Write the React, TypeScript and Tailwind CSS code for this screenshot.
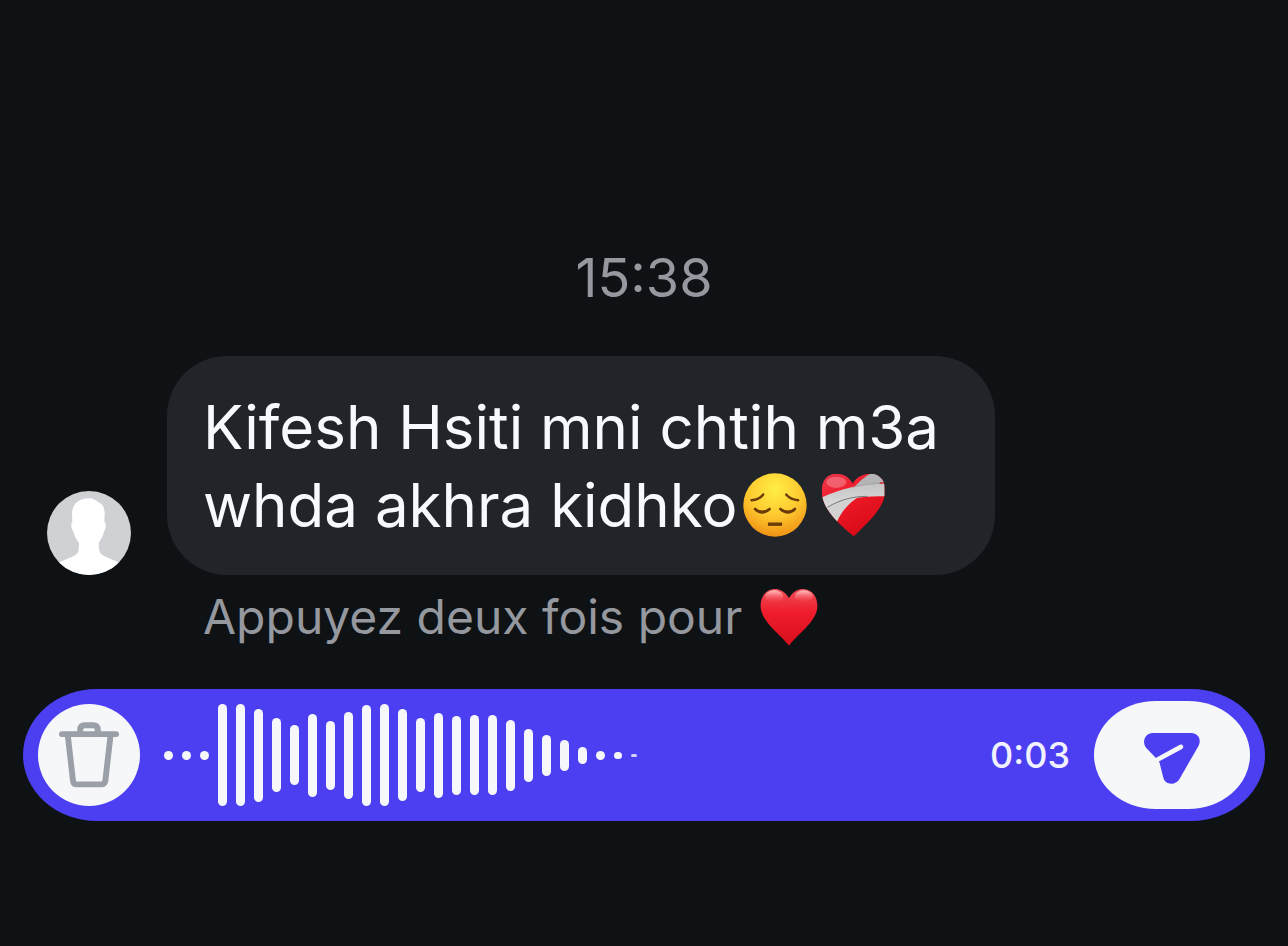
const waveform = [9, 9, 9, 102, 102, 93, 74, 60, 83, 69, 87, 101, 102, 92, 74, 85, 79, 80, 80, 71, 53, 41, 31, 17, 9];

interface IconProps {
  className?: string;
}

const Avatar = ({ className }: IconProps) => (
  <svg viewBox="0 0 252 252" className={className} role="img" aria-label="Photo de profil">
    <defs>
      <clipPath id="avatar-clip">
        <circle cx="126" cy="126" r="126" />
      </clipPath>
    </defs>
    <g clipPath="url(#avatar-clip)">
      <rect width="252" height="252" fill="#cfd1d4" />
      <path
        fill="#fff"
        d="M125 22C138 21 146 27 153 33C167 38 174 52 173 70L172 92C179 98 177 114 171 121C169 134 162 146 155 155L156 174C158 188 166 193 180 199L212 213V252H38V213L74 198C88 192 94 187 95 174L96 156C88 147 82 134 79 121C72 114 71 98 76 92L75 68C75 42 92 23 125 22Z"
      />
    </g>
  </svg>
);

const PensiveFace = ({ className }: IconProps) => (
  <svg viewBox="0 0 190 190" className={className} role="img" aria-label="😔">
    <defs>
      <radialGradient id="face" cx="0.5" cy="0.25" r="0.78">
        <stop offset="0" stopColor="#ffee45" />
        <stop offset="0.55" stopColor="#fdc82f" />
        <stop offset="1" stopColor="#ee8d12" />
      </radialGradient>
    </defs>
    <circle cx="95" cy="95" r="94" fill="url(#face)" />
    <g fill="none" stroke="#6b3b09" strokeLinecap="round">
      <path strokeWidth="7" d="M25 81Q48 80 60 64M128 64Q142 80 164 81" />
      <path strokeWidth="8" d="M36 107Q56 127 79 107M111 107Q134 127 154 107" />
      <path strokeWidth="10" strokeLinecap="butt" d="M74 152H116" />
    </g>
    <path fill="#6b3b09" d="M36 107Q56 115 79 107Q56 130 36 107ZM111 107Q134 115 154 107Q132 130 111 107Z" />
  </svg>
);

const MendingHeart = ({ className }: IconProps) => (
  <svg viewBox="0 0 192 192" className={className} role="img" aria-label="❤️‍🩹">
    <defs>
      <linearGradient id="mending" x1="0" y1="0" x2="0.5" y2="1">
        <stop offset="0" stopColor="#e63c50" />
        <stop offset="0.4" stopColor="#f21b2a" />
        <stop offset="1" stopColor="#d90c18" />
      </linearGradient>
      <linearGradient id="bandage" x1="0" y1="0" x2="0" y2="1">
        <stop offset="0" stopColor="#c4c4c4" />
        <stop offset="1" stopColor="#dededf" />
      </linearGradient>
      <clipPath id="mending-clip">
        <path d="M95 32C108 8 132 2 150 2C172 3 191 18 191 44V66C186 108 136 154 98 190C60 158 10 116 3 66C-2 30 14 2 46 2C70 2 86 14 95 32Z" />
      </clipPath>
    </defs>
    <g clipPath="url(#mending-clip)">
      <rect width="192" height="192" fill="url(#mending)" />
      <ellipse cx="46" cy="28" rx="30" ry="17" fill="#f9a0a8" opacity="0.45" />
      <path fill="#b3b4b5" d="M100 42C116 26 130 10 154 0L180 2L192 24L190 40L130 46Z" />
      <path fill="#d2d2d3" d="M14 104L88 66L116 70C84 90 62 114 48 146L18 122Z" />
      <path fill="url(#bandage)" d="M0 74C60 46 120 32 192 32V70C120 68 70 78 10 106Z" />
      <path fill="none" stroke="#77777c" strokeWidth="3" d="M20 102C60 80 94 70 140 70" />
      <path fill="none" stroke="#9c9da0" strokeWidth="2" d="M94 43Q140 31 176 31" />
      <path fill="none" stroke="#d9222f" strokeWidth="4" d="M176 30H192" />
    </g>
  </svg>
);

const RedHeart = ({ className }: IconProps) => (
  <svg viewBox="0 0 172 172" className={className} role="img" aria-label="❤️">
    <defs>
      <linearGradient id="heart" x1="0" y1="0" x2="0" y2="1">
        <stop offset="0" stopColor="#f04d57" />
        <stop offset="0.4" stopColor="#ef1d2d" />
        <stop offset="1" stopColor="#d80e1b" />
      </linearGradient>
      <linearGradient id="shine" x1="0" y1="0" x2="0" y2="1">
        <stop offset="0" stopColor="#ffc4c2" />
        <stop offset="1" stopColor="#f5505a" stopOpacity="0" />
      </linearGradient>
    </defs>
    <path
      fill="url(#heart)"
      d="M86 30C98 10 114 3 128 3C156 4 172 28 170 58C166 102 112 136 86 171C60 136 6 102 2 58C0 28 16 4 44 3C58 3 74 10 86 30Z"
    />
    <ellipse cx="42" cy="25" rx="27" ry="18" fill="url(#shine)" />
    <ellipse cx="130" cy="25" rx="27" ry="18" fill="url(#shine)" />
  </svg>
);

const TrashIcon = ({ className }: IconProps) => (
  <svg viewBox="0 0 186 202" className={className} aria-hidden="true">
    <g fill="none" stroke="#9a9fa8" strokeWidth="18" strokeLinecap="round">
      <path d="M10 37H176" />
      <path d="M66 37V25Q66 10 80 10H106Q120 10 120 25V37" />
      <path d="M28 40L44 180Q45 191 55 191H131Q141 191 143 180L159 40" />
    </g>
  </svg>
);

const SendIcon = ({ className }: IconProps) => (
  <svg viewBox="0 0 168 154" className={className} aria-hidden="true">
    <path
      fill="#4c3ff2"
      d="M26 0H142C163 0 174 20 164 39L107 138C96 159 64 158 58 136L46 88L34 74L7 46C-9 28 3 0 26 0Z"
    />
    <path fill="none" stroke="#f6f7f9" strokeWidth="14" strokeLinecap="round" d="M34 84L111 42" />
  </svg>
);

const VoiceRecorder = () => (
  <div className="mx-[23px] mt-10 flex h-[132px] items-center rounded-[74px/66px] bg-[#4c3ff2] px-[15px]">
    <button
      type="button"
      aria-label="Supprimer"
      className="flex size-[102px] shrink-0 items-center justify-center rounded-full bg-[#f6f7f9]"
    >
      <TrashIcon className="h-[66px] w-[62px]" />
    </button>
    <div className="ml-6 flex flex-1 items-center gap-[9px]">
      {waveform.map((height, i) => (
        <span key={i} className="w-[9px] shrink-0 rounded-full bg-[#f6f7fb]" style={{ height }} />
      ))}
      <span className="h-[7px] w-2 shrink-0 rounded-full bg-[#f6f7fb]" />
      <span className="h-[3px] w-1.5 shrink-0 rounded-full bg-[#d5d3fb]" />
    </div>
    <span className="text-[36px] leading-none font-medium text-[#f1f1ff]">0:03</span>
    <button
      type="button"
      aria-label="Envoyer"
      className="ml-6 flex h-[108px] w-[156px] shrink-0 items-center justify-center rounded-[62px/54px] bg-[#f6f7f9] pt-1.5"
    >
      <SendIcon className="h-[51px] w-14" />
    </button>
  </div>
);

export default function App() {
  return (
    <main className="min-h-screen bg-[#0e1215] pt-[244px] font-['Inter','Liberation_Sans',sans-serif]">
      <time className="block text-center text-[54px] leading-[68px] text-[#95989f]">15:38</time>
      <div className="mt-11 flex items-end gap-9 px-[47px]">
        <Avatar className="size-[84px] shrink-0" />
        <p className="max-w-[828px] flex-1 rounded-[60px] bg-[#212428] pt-8 pr-6 pb-[31px] pl-9 text-[60px] leading-[78px] text-[#f8f9fd]">
          Kifesh Hsiti mni chtih m3a
          <br />
          <span className="flex items-center">
            whda akhra kidhko
            <PensiveFace className="ml-1.5 size-16" />
            <MendingHeart className="ml-3.5 size-16" />
          </span>
        </p>
      </div>
      <div className="mt-2.5 flex items-center pl-[203px] text-[48px] leading-[64px] text-[#95989f]">
        Appuyez deux fois pour
        <RedHeart className="ml-[18px] size-[58px]" />
      </div>
      <VoiceRecorder />
    </main>
  );
}
